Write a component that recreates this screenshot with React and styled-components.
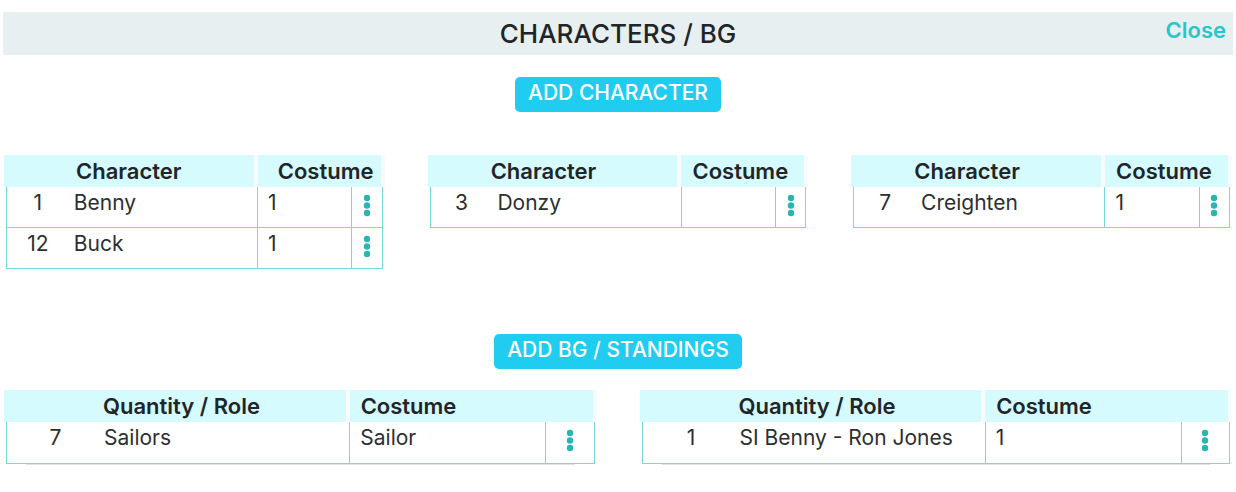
import React from "react";
import styled, { createGlobalStyle } from "styled-components";

const GlobalStyle = createGlobalStyle`
  *, *::before, *::after { box-sizing: border-box; }
  body {
    margin: 0;
    background: #fff;
    color: #212529;
    font-family: Inter, "Liberation Sans", sans-serif;
    font-size: 22px;
    line-height: 32px;
  }
`;

const Page = styled.main`
  padding: 12px 3px 28px;
`;

const Header = styled.header`
  display: grid;
  grid-template-columns: 1fr auto 1fr;
  align-items: start;
  padding-right: 7px;
  padding-left: 7px;
  background: #e7eff1;
`;

const Title = styled.h1`
  grid-column: 2;
  margin: 0;
  font-size: 26px;
  font-weight: 500;
  line-height: 43px;
`;

const CloseButton = styled.button`
  justify-self: end;
  padding: 0;
  border: 0;
  background: none;
  color: #26c6c9;
  font: inherit;
  font-weight: 600;
  line-height: 36px;
  cursor: pointer;
`;

const Section = styled.section`
  display: flex;
  flex-direction: column;
  align-items: center;
  gap: ${(p) => p.$gap}px;
  margin-top: ${(p) => p.$top}px;
`;

const AddButton = styled.button`
  height: 35px;
  padding: 0 13px 3px;
  border: 0;
  border-radius: 5px;
  background: #20cdf0;
  color: #fff;
  font: inherit;
  font-size: 21px;
  font-weight: 500;
  cursor: pointer;
`;

const Tables = styled.div`
  display: grid;
  grid-template-columns: repeat(${(p) => p.$count}, minmax(0, 1fr));
  align-items: start;
  column-gap: 43px;
  align-self: stretch;
  padding: 0 1px;
`;

const Table = styled.table`
  display: block;
`;

const Head = styled.thead`
  display: block;
`;

const Body = styled.tbody`
  display: block;
  margin: 0 2px;
  color: #2c2f32;
  font-size: 21px;
`;

const HeadRow = styled.tr`
  display: grid;
  grid-template-columns: ${(p) => p.$columns};
`;

const HeadCell = styled.th`
  padding: 0 0 0 ${(p) => p.$inset}px;
  border-right: 4px solid #f8fafb;
  background: #d5fbff;
  font-weight: 600;
  text-align: left;
  white-space: nowrap;
`;

const Row = styled.tr`
  display: grid;
  grid-template-columns: ${(p) => p.$columns};
  height: ${(p) => (p.$tall ? 42 : 41)}px;
  border-bottom: 1px solid #76d9dc;
`;

const NumberCell = styled.td`
  padding: 0;
  border-left: 1px solid #76d9dc;
  text-align: center;
`;

const NameCell = styled.td`
  padding: 0 0 0 ${(p) => p.$inset}px;
  white-space: nowrap;
`;

const CostumeCell = styled.td`
  padding: 0 0 0 10px;
  border-left: 1px solid #76d9dc;
`;

const MenuCell = styled.td`
  display: flex;
  justify-content: center;
  align-items: flex-start;
  padding: 7px 0 0;
  border-right: 1px solid #76d9dc;
  border-left: 1px solid #76d9dc;
`;

const MenuButton = styled.button`
  display: flex;
  padding: 0;
  border: 0;
  background: none;
  color: #2ab5b5;
  cursor: pointer;
`;

const Shade = styled.div`
  height: 1px;
  margin: 0 22px;
  background: #dfe1e2;
`;

const share = (...parts) => parts.map((n) => `minmax(0, ${n}fr)`).join(" ");

const layouts = {
  character: { head: share(8, 4), row: share(2, 6, 3, 1), nameInset: 5 },
  background: { head: share(7, 5), row: share(2, 5, 4, 1), nameInset: 0 },
};

function CastTable({ kind, nameLabel, rows, headInset, costumeInset }) {
  const layout = layouts[kind];
  const isBackground = kind === "background";
  return (
    <div>
      <Table>
        <Head>
          <HeadRow $columns={layout.head}>
            <HeadCell scope="col" colSpan={2} $inset={headInset}>{nameLabel}</HeadCell>
            <HeadCell scope="col" colSpan={2} $inset={costumeInset}>Costume</HeadCell>
          </HeadRow>
        </Head>
        <Body>
          {rows.map(([number, name, costume]) => (
            <Row key={name} $columns={layout.row} $tall={isBackground}>
              <NumberCell>{number}</NumberCell>
              <NameCell $inset={layout.nameInset}>{name}</NameCell>
              <CostumeCell>{costume}</CostumeCell>
              <MenuCell>
                <MenuButton type="button" aria-label={`Options for ${name}`}>
                  <svg width="8" height="24" viewBox="0 0 8 24" fill="currentColor" aria-hidden="true">
                    <circle cx="4" cy="4" r="3.2" />
                    <circle cx="4" cy="11.5" r="3.2" />
                    <circle cx="4" cy="19" r="3.2" />
                  </svg>
                </MenuButton>
              </MenuCell>
            </Row>
          ))}
        </Body>
      </Table>
      {isBackground && <Shade />}
    </div>
  );
}

const characters = [
  { rows: [["1", "Benny", "1"], ["12", "Buck", "1"]], headInset: 72, costumeInset: 20 },
  { rows: [["3", "Donzy", ""]], headInset: 63, costumeInset: 11 },
  { rows: [["7", "Creighten", "1"]], headInset: 63, costumeInset: 11 },
];

const background = [
  [["7", "Sailors", "Sailor"]],
  [["1", "SI Benny - Ron Jones", "1"]],
];

export default function App() {
  return (
    <Page>
      <GlobalStyle />
      <Header>
        <Title>CHARACTERS / BG</Title>
        <CloseButton type="button">Close</CloseButton>
      </Header>
      <Section $top={22} $gap={43}>
        <AddButton type="button">ADD CHARACTER</AddButton>
        <Tables $count={3}>
          {characters.map((table) => (
            <CastTable key={table.rows[0][1]} kind="character" nameLabel="Character" {...table} />
          ))}
        </Tables>
      </Section>
      <Section $top={65} $gap={21}>
        <AddButton type="button">ADD BG / STANDINGS</AddButton>
        <Tables $count={2}>
          {background.map((rows) => (
            <CastTable
              key={rows[0][1]}
              kind="background"
              nameLabel="Quantity / Role"
              rows={rows}
              headInset={99}
              costumeInset={11}
            />
          ))}
        </Tables>
      </Section>
    </Page>
  );
}
